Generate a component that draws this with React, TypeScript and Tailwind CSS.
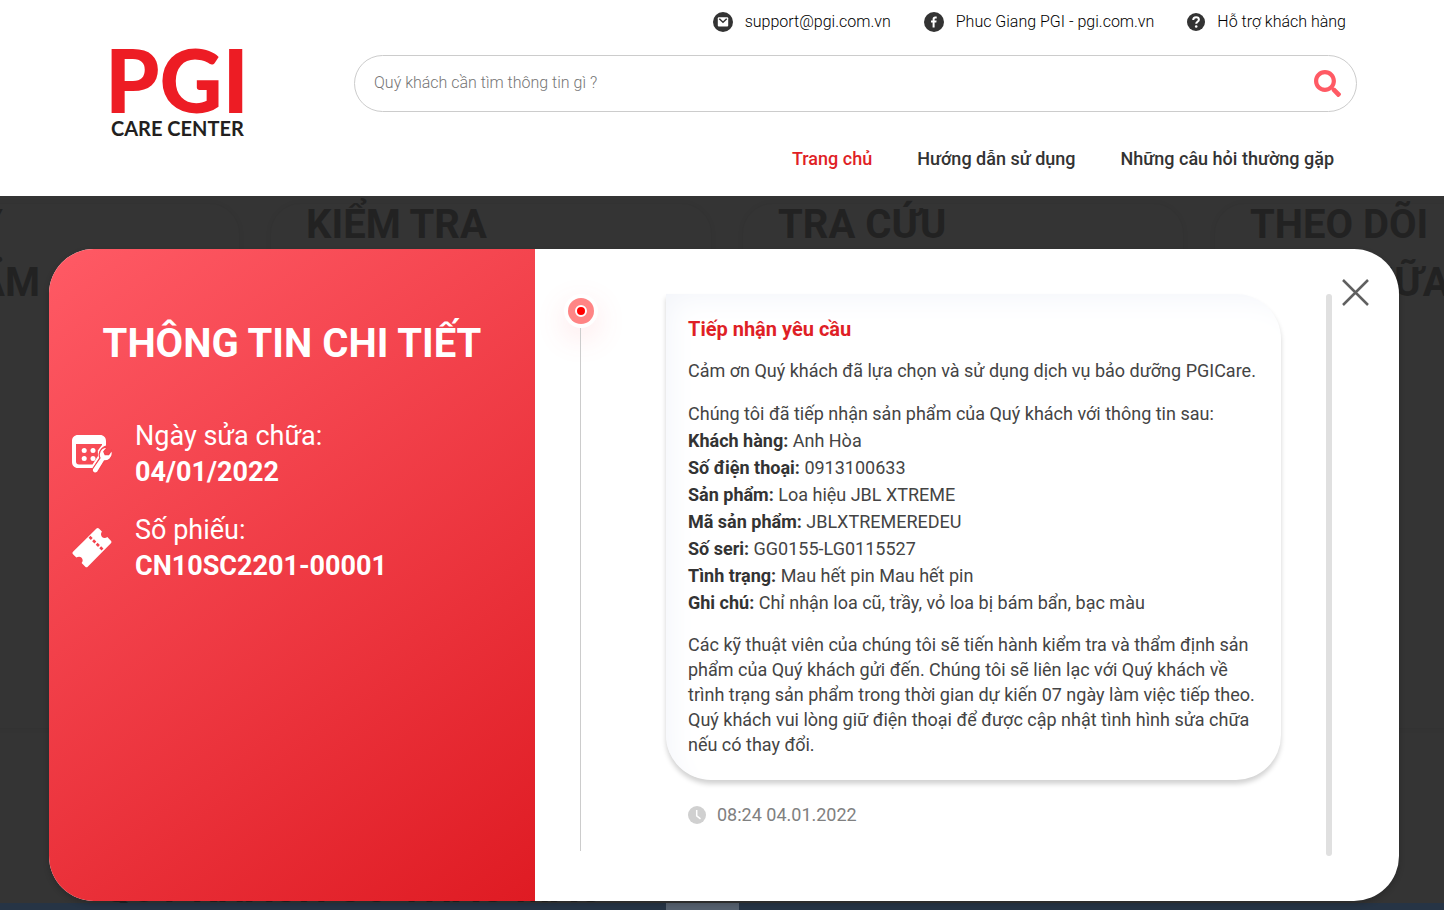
import React from "react";
import { FaSearch } from "react-icons/fa";

const details = [
  { label: "Khách hàng:", value: "Anh Hòa" },
  { label: "Số điện thoại:", value: "0913100633" },
  { label: "Sản phẩm:", value: "Loa hiệu JBL XTREME" },
  { label: "Mã sản phẩm:", value: "JBLXTREMEREDEU" },
  { label: "Số seri:", value: "GG0155-LG0115527" },
  { label: "Tình trạng:", value: "Mau hết pin Mau hết pin" },
  { label: "Ghi chú:", value: "Chỉ nhận loa cũ, trầy, vỏ loa bị bám bẩn, bạc màu" },
];

const services = [
  ["ĐĂNG KÝ", "SẢN PHẨM"],
  ["KIỂM TRA", "BẢO HÀNH"],
  ["TRA CỨU", "SẢN PHẨM"],
  ["THEO DÕI", "SỬA CHỮA"],
];

function MailIcon() {
  return (
    <svg className="size-5" viewBox="0 0 20 20" aria-hidden="true">
      <circle cx="10" cy="10" r="10" fill="#333" />
      <rect x="4.8" y="5.2" width="10.4" height="9.4" rx="1" fill="#fff" />
      <path d="M6.3 6.7 10 10.2l3.7-3.5" fill="none" stroke="#333" strokeWidth="1.5" />
    </svg>
  );
}

function FacebookIcon() {
  return (
    <svg className="size-5" viewBox="0 0 20 20" aria-hidden="true">
      <circle cx="10" cy="10" r="10" fill="#333" />
      <path
        d="M8.6 15.6v-5H7V8.5h1.6V7.3c0-1.8 1-2.8 2.6-2.8h1.5v2h-1c-.8 0-1.1.4-1.1 1.1v.9h2l-.3 2.1h-1.7v5z"
        fill="#fff"
      />
    </svg>
  );
}

function HelpIcon() {
  return (
    <svg className="size-[18px]" viewBox="0 0 18 18" aria-hidden="true">
      <circle cx="9" cy="9" r="9" fill="#333" />
      <path
        d="M6.2 7.1c0-1.7 1.2-2.8 2.9-2.8s2.8 1 2.8 2.4c0 2-2.7 2.1-2.7 4"
        fill="none"
        stroke="#fff"
        strokeWidth="2"
      />
      <circle cx="9.2" cy="13.5" r="1.3" fill="#fff" />
    </svg>
  );
}

function RepairDateIcon() {
  return (
    <svg className="size-10 shrink-0" viewBox="0 0 40 40" fill="#fff" aria-hidden="true">
      <path
        fillRule="evenodd"
        d="M6 1h22c3.600 0 6 2.400 6 6v4.500c-2.800.8-5 2.700-6.200 5.500-.9 2.200-.8 4.500-.2 6.300L21 34H6c-3.600 0-6-2.400-6-6V7c0-3.600 2.400-6 6-6zM4 10v17.500c0 2 1 3 3 3h13.500L26 22l-.2-5.500L30 11v-1z"
      />
      <circle cx="12.200" cy="16.500" r="2.500" />
      <circle cx="21" cy="16.500" r="2.500" />
      <circle cx="12.200" cy="24.500" r="2.500" />
      <circle cx="21" cy="24.500" r="2.500" />
      <path
        d="M35.500 13.200c-4.200-.4-8 2.500-8.300 6.900-.1 1.400.2 2.700.8 3.900l-7.200 10.500c-1 1.500-.4 3.200.8 4 1.400.9 3.200.7 4.300-.9l6.500-10.700c3.600.3 7.800-2.500 7.900-7.100 0-1.200-.2-2.400-.7-3.500l-2.900 4.400-3.600-.1-1.300-2.900z"
        stroke="#f4454f"
        strokeWidth="1.200"
      />
    </svg>
  );
}

function TicketIcon() {
  return (
    <svg className="size-10 shrink-0" viewBox="0 0 40 40" fill="#fff" aria-hidden="true">
      <path d="M24.500 0.600c.7-.7 1.700-.7 2.400 0l3 3c-1.300 1.900-1.200 4 .1 5.300s3.500 1.500 5.300.2l3.600 3.700c.7.700.7 1.700 0 2.400L15.700 38.800c-.7.7-1.700.7-2.400 0l-3.700-3.700c1.500-1.900 1.300-4.100 0-5.400s-3.500-1.400-5.300-.1L1 26.200c-.7-.7-.7-1.700 0-2.400z" />
      <path d="M17.500 8.800 31 22" stroke="#f3424d" strokeWidth="2.600" strokeDasharray="3.200 1.800" />
    </svg>
  );
}

function ClockIcon() {
  return (
    <svg className="size-[18px]" viewBox="0 0 18 18" aria-hidden="true">
      <circle cx="9" cy="9" r="9" fill="#d0d0d0" />
      <path d="M8.700 4v5.800l3.800 3" fill="none" stroke="#fff" strokeWidth="1.500" />
    </svg>
  );
}

function Header() {
  return (
    <header className="flex bg-white pb-[23px]">
      <a href="#home" className="ml-[105px] mt-[42px] w-[249px] shrink-0" aria-label="PGI Care Center">
        <span className="block font-['Lato'] text-[87px] font-black leading-[76px] text-[#ed1c24]">PGI</span>
        <span className="block pl-[6px] font-['Lato'] text-xl font-bold leading-5 text-[#231f20]">CARE CENTER</span>
      </a>
      <div className="mr-[87px] grow">
        <div className="flex justify-end gap-[33px] pr-[11px] pt-[10px] font-light leading-6 text-black">
          <a href="#mail" className="flex items-center gap-3">
            <MailIcon />
            support@pgi.com.vn
          </a>
          <a href="#facebook" className="flex items-center gap-3">
            <FacebookIcon />
            Phuc Giang PGI - pgi.com.vn
          </a>
          <a href="#support" className="flex items-center gap-3">
            <HelpIcon />
            Hỗ trợ khách hàng
          </a>
        </div>
        <form className="mt-[21px] flex h-[57px] items-center rounded-full border border-[#ccc] pb-px pl-[19px] pr-[15px]">
          <input
            aria-label="Tìm kiếm"
            placeholder="Quý khách cần tìm thông tin gì ?"
            className="min-w-0 grow font-light outline-none placeholder:text-[#757575]"
          />
          <button type="button" aria-label="Tìm" className="text-[#ff5a64]">
            <FaSearch size={27} />
          </button>
        </form>
        <nav className="mt-[33px] flex justify-end gap-[45px] pr-[23px] text-lg font-medium leading-7">
          <a href="#home" className="text-[#e01f26]">Trang chủ</a>
          <a href="#guide">Hướng dẫn sử dụng</a>
          <a href="#faq">Những câu hỏi thường gặp</a>
        </nav>
      </div>
    </header>
  );
}

function Backdrop() {
  return (
    <div aria-hidden="true" className="font-bold text-[#222]">
      <div className="-ml-[201px] flex gap-8 pt-2">
        {services.map(([first, second]) => (
          <div
            key={first}
            className="h-[524px] w-[440px] shrink-0 rounded-[30px] pl-[35px] text-[40px] leading-[58px] shadow-[0_0_6px_rgba(0,0,0,0.06)]"
          >
            <div className="-mt-2">{first}</div>
            <div>{second}</div>
          </div>
        ))}
      </div>
      <div className="ml-[103px] mt-[131px] h-11 text-[40px] leading-[60px]">QUÝ KHÁCH CÓ THẮC MẮC</div>
      <div className="relative h-10 bg-[#263445] pl-[666px]">
        <div className="h-10 w-[73px] bg-[#56616f]" />
      </div>
    </div>
  );
}

function Summary() {
  return (
    <section className="w-[36%] bg-linear-[145deg,#ff5a65,#df1b23] px-[23px] pt-[61px] text-white">
      <h1 className="text-center text-[40px] font-bold leading-[68px]">THÔNG TIN CHI TIẾT</h1>
      <div className="mt-10 flex flex-col gap-[22px] text-[27px] leading-9">
        <div className="flex items-center gap-[23px]">
          <RepairDateIcon />
          <p>
            Ngày sửa chữa:
            <br />
            <b>04/01/2022</b>
          </p>
        </div>
        <div className="flex items-center gap-[23px]">
          <TicketIcon />
          <p>
            Số phiếu:
            <br />
            <b>CN10SC2201-00001</b>
          </p>
        </div>
      </div>
    </section>
  );
}

function Timeline() {
  return (
    <div className="flex grow pb-[45px] pl-7 pt-[45px]">
      <div className="mb-[5px] flex w-[35px] shrink-0 flex-col items-center">
        <div className="flex size-[34px] shrink-0 items-center justify-center rounded-full bg-white shadow-[0_10px_30px_rgba(255,90,100,0.15)]">
          <div className="flex size-[26px] items-center justify-center rounded-full bg-[#ff8585]">
            <div className="size-3 rounded-full border-2 border-white bg-[#f00]" />
          </div>
        </div>
        <div className="w-px grow bg-[#ccc]" />
      </div>
      <div className="ml-[68px] grow">
        <article className="rounded-[45px] rounded-tl-none pb-[23px] pl-[22px] pr-5 pt-[21px] text-lg leading-[27px] text-[#444] shadow-[0_4px_5px_rgba(0,0,0,0.18),inset_16px_16px_30px_-12px_#f3f5fa]">
          <h2 className="text-xl font-bold leading-7 text-[#df1f26]">Tiếp nhận yêu cầu</h2>
          <p className="mt-[14px]">Cảm ơn Quý khách đã lựa chọn và sử dụng dịch vụ bảo dưỡng PGICare.</p>
          <p className="mt-4">Chúng tôi đã tiếp nhận sản phẩm của Quý khách với thông tin sau:</p>
          {details.map((item) => (
            <p key={item.label}>
              <b className="text-[#333]">{item.label}</b> {item.value}
            </p>
          ))}
          <p className="mt-4 leading-[25px]">
            Các kỹ thuật viên của chúng tôi sẽ tiến hành kiểm tra và thẩm định sản phẩm của Quý khách gửi đến. Chúng tôi
            sẽ liên lạc với Quý khách về trình trạng sản phẩm trong thời gian dự kiến 07 ngày làm việc tiếp theo. Quý
            khách vui lòng giữ điện thoại để được cập nhật tình hình sửa chữa nếu có thay đổi.
          </p>
        </article>
        <div className="mt-[21px] flex items-center gap-[11px] pl-[22px] text-lg leading-7 text-[#808080]">
          <ClockIcon />
          <time>08:24 04.01.2022</time>
        </div>
      </div>
      <div className="ml-[45px] w-[6px] shrink-0 rounded-full bg-[#e0e0e0]" />
    </div>
  );
}

export default function App() {
  return (
    <div className="h-screen overflow-hidden bg-[#343434] font-['Roboto',sans-serif] text-base text-[#333]">
      <Header />
      <main className="relative">
        <Backdrop />
        <div
          role="dialog"
          aria-label="Thông tin chi tiết"
          className="absolute inset-x-0 top-0 ml-[49px] mr-[45px] mt-[53px] flex min-h-[652px] overflow-hidden rounded-[45px] bg-white shadow-[0_3px_6px_rgba(0,0,0,0.2)]"
        >
          <Summary />
          <div className="flex w-[64%]">
            <Timeline />
            <div className="w-[67px] shrink-0 pl-[10px] pt-[30px]">
              <button type="button" aria-label="Đóng" className="block">
                <svg className="size-[27px]" viewBox="0 0 27 27" aria-hidden="true">
                  <path d="M1 1l25 25M26 1 1 26" stroke="#606060" strokeWidth="2.500" />
                </svg>
              </button>
            </div>
          </div>
        </div>
      </main>
    </div>
  );
}
